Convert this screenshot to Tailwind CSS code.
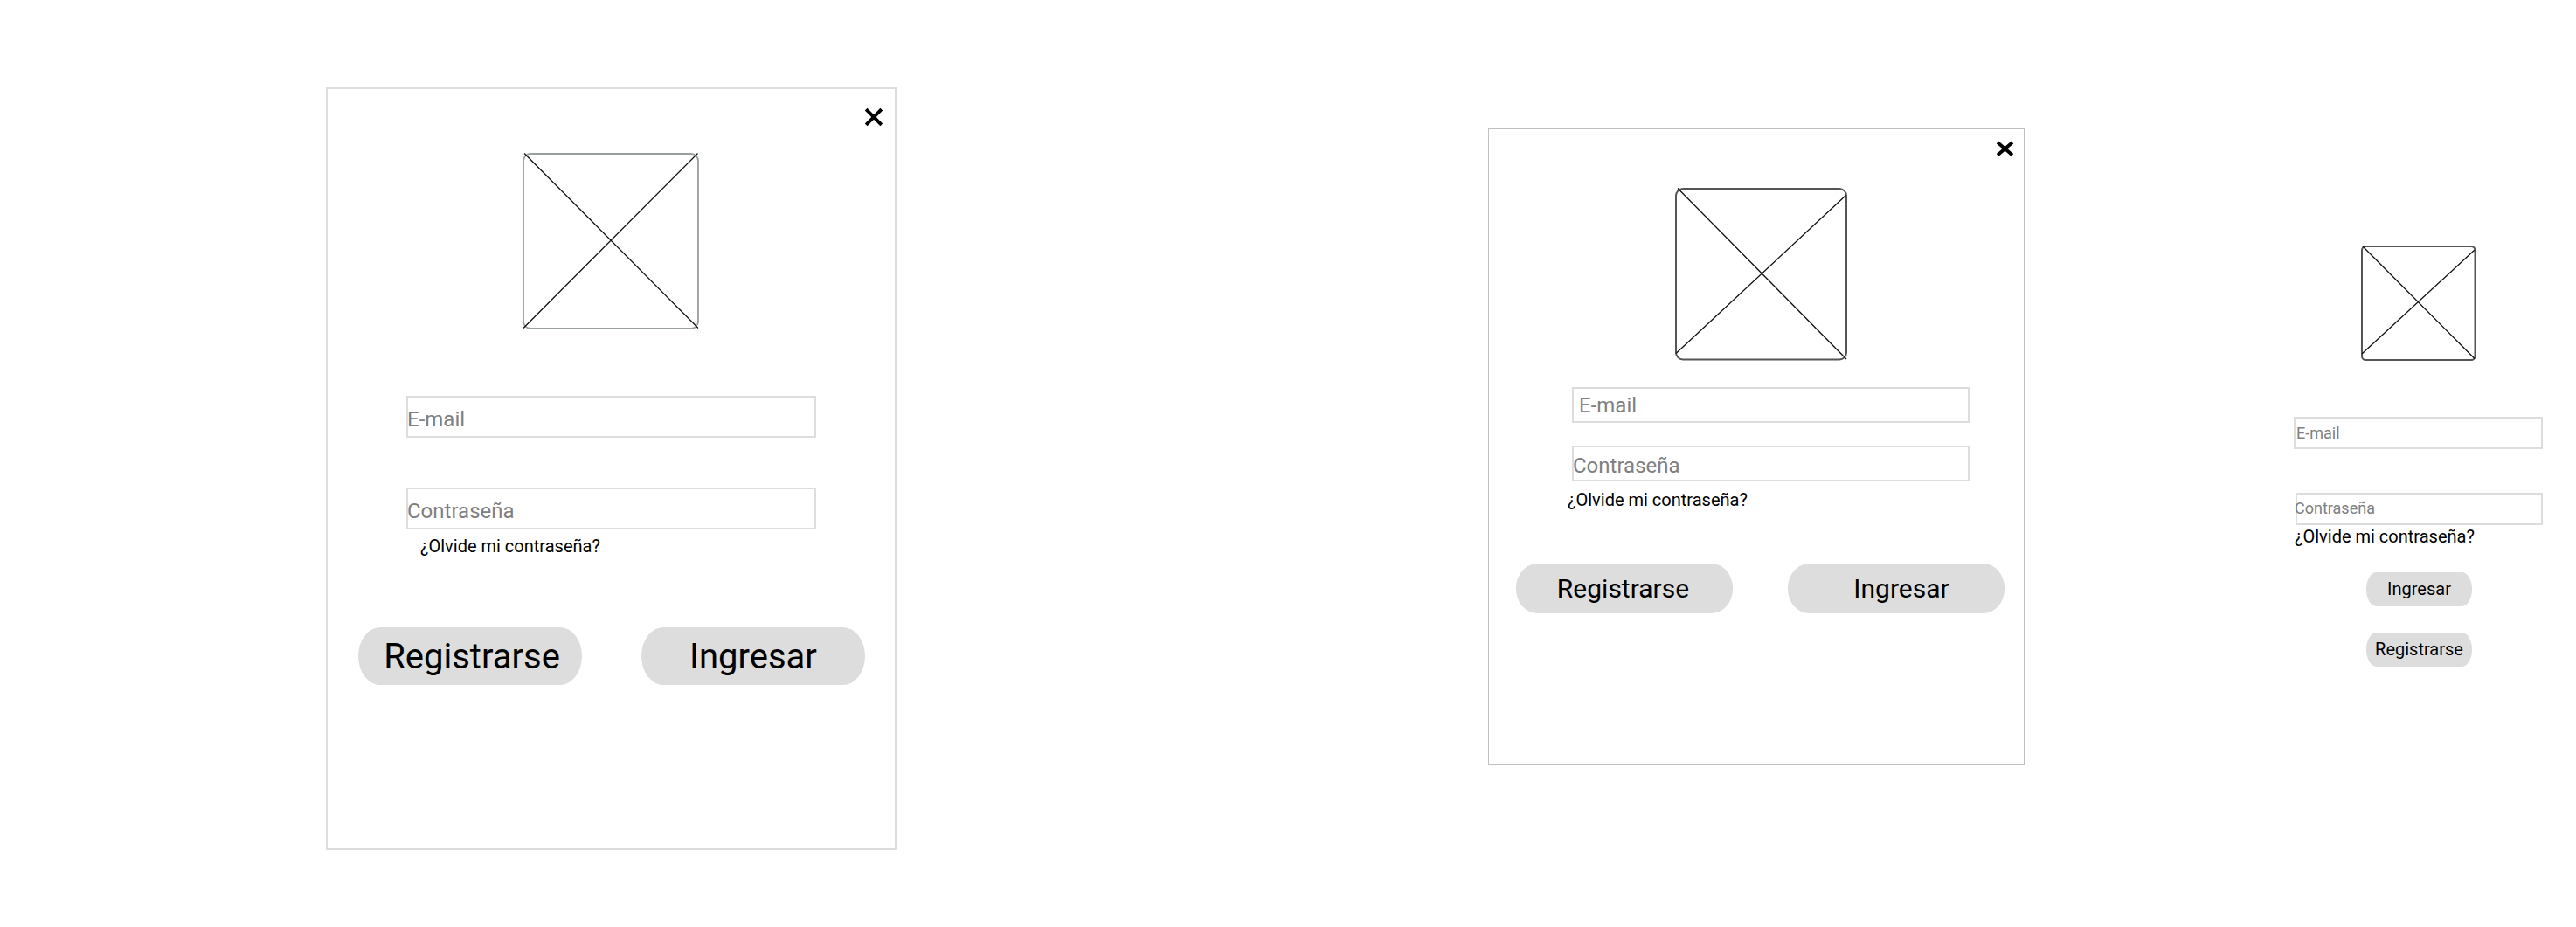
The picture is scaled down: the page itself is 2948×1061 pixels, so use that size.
<!DOCTYPE html>
<html lang="es">
<head>
<meta charset="utf-8">
<title>Iniciar sesión</title>
<script src="https://cdn.jsdelivr.net/npm/@tailwindcss/browser@4"></script>
</head>
<body class="bg-white text-black font-['Roboto',sans-serif] w-[2948px] h-[1061px] overflow-hidden flex items-start">

<!-- Desktop -->
<section class="ml-[373px] mt-[100px] w-[653px] h-[873px] shrink-0 border-2 border-[#ddd] flex flex-col">
  <div class="flex justify-end pt-[21px] pr-[13px]">
    <svg class="w-[22px] h-[22px]" viewBox="0 0 22 22" stroke="#000" stroke-width="4"><path d="M2.200 2.200L19.800 19.800M19.800 2.200L2.200 19.800"/></svg>
  </div>
  <svg class="ml-[223px] mt-[30px] w-[203px] h-[203px] shrink-0" viewBox="0 0 203 203" fill="none"><rect x="1" y="1" width="200" height="200" rx="8" stroke="#999f9c" stroke-width="1.8"/><path d="M2 .5L201 200.500M200.500 .5L1 200.500" stroke="#111" stroke-width="1.300"/></svg>
  <div class="ml-[90px] mt-[75px] w-[469px] h-[48px] shrink-0 border-2 border-[#ddd] text-[#808080] text-2xl leading-[28px] pt-[11px] whitespace-nowrap"><span class="-ml-px">E-mail</span></div>
  <div class="ml-[90px] mt-[57px] w-[469px] h-[48px] shrink-0 border-2 border-[#ddd] text-[#808080] text-2xl leading-[28px] pt-[11px] whitespace-nowrap"><span class="-ml-px">Contraseña</span></div>
  <a class="ml-[106px] mt-[7px] text-xl leading-[24px]">¿Olvide mi contraseña?</a>
  <div class="flex gap-[68px] ml-[35px] mt-[81px]">
    <button class="w-[256px] h-[66px] bg-[#ddd] rounded-[25px/33px] text-[40px] leading-[66px] pl-1 pt-px">Registrarse</button>
    <button class="w-[256px] h-[66px] bg-[#ddd] rounded-[25px/33px] text-[40px] leading-[66px] pt-px">Ingresar</button>
  </div>
</section>

<!-- Tablet -->
<section class="ml-[677px] mt-[147px] w-[614px] h-[729px] shrink-0 border border-[#c0c0c0] flex flex-col">
  <div class="flex justify-end pt-[13px] pr-[11px]">
    <svg class="w-[21px] h-[19px]" viewBox="0 0 21 19" stroke="#000" stroke-width="3.700"><path d="M2 2L19 16.500M19 2L2 16.500"/></svg>
  </div>
  <svg class="ml-[213px] mt-[35px] w-[198px] h-[198px] shrink-0" viewBox="0 0 198 198" fill="none"><rect x="1" y="1" width="195" height="195.500" rx="8" stroke="#555" stroke-width="2"/><path d="M3 .5L196 196M195.500 8.500L1 189.500" stroke="#111" stroke-width="1.300"/></svg>
  <div class="ml-[95px] mt-[30px] w-[455px] h-[41px] shrink-0 border-2 border-[#ddd] text-[#808080] text-2xl leading-[28px] pt-[5px] pl-[6px] whitespace-nowrap">E-mail</div>
  <div class="ml-[95px] mt-[26px] w-[455px] h-[41px] shrink-0 border-2 border-[#ddd] text-[#808080] text-2xl leading-[28px] pt-[7px] whitespace-nowrap"><span class="-ml-px">Contraseña</span></div>
  <a class="ml-[90px] mt-[9px] text-xl leading-[24px]">¿Olvide mi contraseña?</a>
  <div class="flex gap-[63px] ml-[31px] mt-[61px]">
    <button class="w-[248px] h-[57px] bg-[#ddd] rounded-[24px/28px] text-[30px] leading-[57px] pr-[3px]">Registrarse</button>
    <button class="w-[248px] h-[57px] bg-[#ddd] rounded-[24px/28px] text-[30px] leading-[57px] pl-[12px]">Ingresar</button>
  </div>
</section>

<!-- Mobile -->
<section class="ml-[308px] mt-[281px] w-[286px] shrink-0 flex flex-col">
  <svg class="ml-[77px] w-[132px] h-[132px] shrink-0" viewBox="0 0 132 132" fill="none"><rect x="1" y="1" width="129.500" height="130" rx="4.500" stroke="#555" stroke-width="2"/><path d="M2 1L130 129.500M130 5L1 124" stroke="#111" stroke-width="1.300"/></svg>
  <div class="mt-[64px] w-[285px] h-[37px] shrink-0 border-2 border-[#ddd] text-[#808080] text-lg leading-[22px] pt-[6px] pl-[1px] whitespace-nowrap">E-mail</div>
  <div class="ml-[2px] mt-[50px] w-[283px] h-[37px] shrink-0 border-2 border-[#ddd] text-[#808080] text-lg leading-[22px] pt-[5px] whitespace-nowrap"><span class="-ml-[3px]">Contraseña</span></div>
  <a class="ml-px mt-[1px] text-xl leading-[24px]">¿Olvide mi contraseña?</a>
  <button class="ml-[83px] mt-[29px] w-[121px] h-[39px] bg-[#ddd] rounded-[12px/20px] text-xl leading-[38px] pb-px">Ingresar</button>
  <button class="ml-[83px] mt-[30px] w-[121px] h-[39px] bg-[#ddd] rounded-[12px/20px] text-xl leading-[38px] pb-px">Registrarse</button>
</section>
</body>
</html>
